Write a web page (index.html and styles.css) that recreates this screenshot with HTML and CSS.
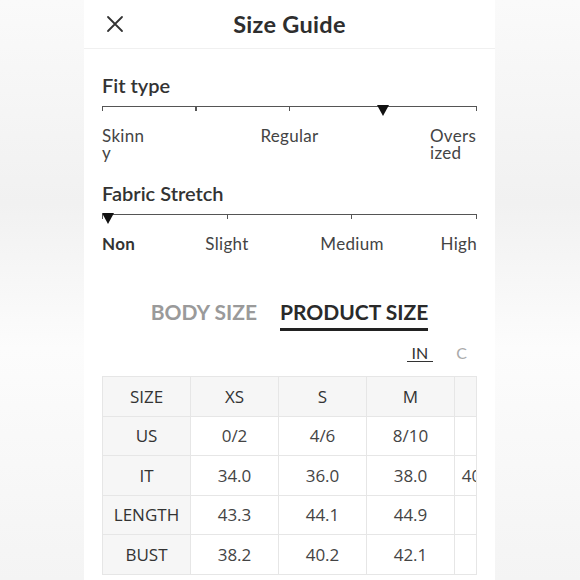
FILE: index.html
```html
<!DOCTYPE html>
<html>
<head>
<meta charset="utf-8">
<link rel="stylesheet" href="styles.css">
</head>
<body>
<div class="panel">
  <header class="topbar">
    <svg class="close" width="18" height="18" viewBox="0 0 18 18"><path d="M2 2 L16 16 M16 2 L2 16" stroke="#333" stroke-width="1.8" fill="none" stroke-linecap="round"/></svg>
    <h1 class="title">Size Guide</h1>
  </header>
  <main class="content">
    <section class="scale">
      <h2 class="scale-title">Fit type</h2>
      <div class="track">
        <div class="ticks"><i></i><i></i><i></i><i></i><i></i></div>
        <span class="marker" style="left: calc(75% - 6.5px)"></span>
      </div>
      <div class="labels fit-labels">
        <span class="lbl end">Skinny</span>
        <span class="lbl mid"><span>Regular</span></span>
        <span class="lbl end">Oversized</span>
      </div>
    </section>
    <section class="scale stretch">
      <h2 class="scale-title">Fabric Stretch</h2>
      <div class="track">
        <div class="ticks"><i></i><i></i><i></i><i></i></div>
        <span class="marker" style="left: 0"></span>
      </div>
      <div class="labels stretch-labels">
        <span class="lbl pin start active"><span>Non</span></span>
        <span class="lbl pin mid"><span>Slight</span></span>
        <span class="lbl pin mid"><span>Medium</span></span>
        <span class="lbl pin finish"><span>High</span></span>
      </div>
    </section>
    <nav class="tabs">
      <span class="tab">BODY SIZE</span>
      <span class="tab current">PRODUCT SIZE</span>
    </nav>
    <div class="units">
      <span class="unit on">IN</span>
      <span class="unit off">C</span>
    </div>
    <div class="table-wrap">
      <table class="sizes">
        <tr class="head"><th>SIZE</th><th>XS</th><th>S</th><th>M</th><th>L</th></tr>
        <tr><th>US</th><td>0/2</td><td>4/6</td><td>8/10</td><td>12</td></tr>
        <tr><th>IT</th><td>34.0</td><td>36.0</td><td>38.0</td><td>40.0/42.0</td></tr>
        <tr><th>LENGTH</th><td>43.3</td><td>44.1</td><td>44.9</td><td>45.7</td></tr>
        <tr><th>BUST</th><td>38.2</td><td>40.2</td><td>42.1</td><td>44.1</td></tr>
      </table>
    </div>
  </main>
</div>
</body>
</html>
```

FILE: styles.css
```css
html, body {
  margin: 0;
  padding: 0;
}
body {
  width: 580px;
  height: 580px;
  overflow: hidden;
  background: linear-gradient(180deg, #fafafa 0%, #f1f1f1 35%, #fcfcfc 60%, #f4f4f4 100%);
  font-family: Lato, "Open Sans", sans-serif;
  color: #333;
}
.panel {
  margin-left: 84px;
  width: 411px;
  height: 580px;
  background: #fff;
  overflow: hidden;
}
.topbar {
  height: 48px;
  border-bottom: 1px solid #f0f0f0;
  display: flex;
  align-items: center;
  justify-content: center;
  position: relative;
}
.close {
  position: absolute;
  left: 22px;
  top: 15px;
}
.title {
  margin: 0;
  font-size: 23.5px;
  font-weight: 700;
  color: #2e2e2e;
  letter-spacing: 0.3px;
}
.content {
  padding: 0 18px;
}
.scale-title {
  margin: 0;
  font-size: 20px;
  line-height: 24px;
  font-weight: 600;
  color: #333;
}
.scale {
  padding-top: 24px;
}
.scale.stretch {
  padding-top: 20px;
}
.track {
  position: relative;
  margin-top: 9px;
  height: 6px;
  border-top: 1.5px solid #555;
}
.ticks {
  display: flex;
  justify-content: space-between;
}
.ticks i {
  display: block;
  width: 1.3px;
  height: 4px;
  background: #555;
}
.marker {
  position: absolute;
  top: -2px;
  width: 0;
  height: 0;
  border-left: 6.5px solid transparent;
  border-right: 6.5px solid transparent;
  border-top: 11px solid #111;
}
.labels {
  margin-top: 14px;
  display: flex;
  justify-content: space-between;
  font-size: 17px;
  line-height: 17px;
  color: #444;
  letter-spacing: 0.3px;
}
.lbl.mid,
.lbl.pin {
  width: 0;
  display: flex;
  justify-content: center;
  white-space: nowrap;
}
.lbl.pin.start {
  justify-content: flex-start;
}
.lbl.pin.finish {
  justify-content: flex-end;
}
.fit-labels .end {
  width: 47px;
  word-break: break-all;
}
.lbl.active {
  font-weight: 700;
  color: #333;
}
.tabs {
  margin-top: 48px;
  display: flex;
  justify-content: center;
  gap: 23px;
}
.tab {
  font-size: 21px;
  line-height: 24px;
  font-weight: 700;
  color: #9a9a9a;
  padding-bottom: 4px;
  border-bottom: 3px solid transparent;
}
.tab.current {
  color: #2a2a2a;
  border-bottom-color: #222;
}
.units {
  margin-top: 11px;
  display: flex;
  justify-content: flex-end;
  align-items: flex-start;
  gap: 23px;
  padding-right: 10px;
  height: 20px;
  font-size: 16px;
}
.unit {
  display: inline-block;
  line-height: 17px;
  margin-top: 2px;
  white-space: nowrap;
}
.unit.on {
  padding: 0 5px;
  border-bottom: 1.5px solid #333;
  color: #333;
}
.unit.off {
  color: #aaa;
}
.table-wrap {
  margin-top: 14px;
  width: 375px;
  overflow: hidden;
  border-right: 1px solid #e6e6e6;
  box-sizing: border-box;
}
.sizes {
  border-collapse: collapse;
  table-layout: fixed;
  width: 440px;
  font-family: "Open Sans", "Noto Sans", sans-serif;
  font-size: 17px;
}
.sizes th, .sizes td {
  width: 88px;
  height: 39.5px;
  padding: 0;
  box-sizing: border-box;
  border: 1px solid #e6e6e6;
  text-align: center;
  font-weight: 400;
  white-space: nowrap;
}
.sizes th {
  background: #f6f6f6;
  color: #333;
}
.sizes td {
  color: #444;
}
```
